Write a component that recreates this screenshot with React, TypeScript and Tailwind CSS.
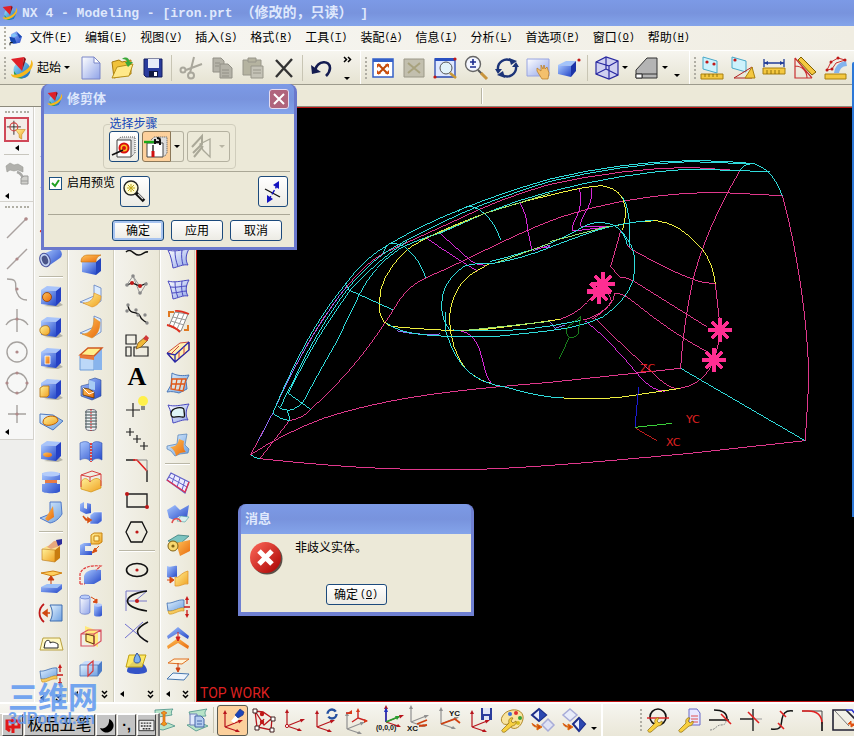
import React from "react";

type Glyph = React.ReactNode;

function Icon({ children, className = "h-6 w-6" }: { children: Glyph; className?: string }) {
  return (
    <svg viewBox="0 0 24 24" className={`${className} shrink-0 overflow-visible`} fill="none" aria-hidden="true">
      {children}
    </svg>
  );
}

function Gradients() {
  const pairs: [string, string, string][] = [
    ["blue", "#a9c8ff", "#2447c8"],
    ["sky", "#e4f3ff", "#6d9fe0"],
    ["gold", "#fff29a", "#f0a020"],
    ["orange", "#ffc45a", "#e8690c"],
    ["steel", "#ffffff", "#8fa3e8"],
    ["globe", "#9fe8ff", "#0a5fb8"],
    ["error", "#ff6a5a", "#a80000"],
  ];
  return (
    <svg className="absolute h-0 w-0" aria-hidden="true">
      <defs>
        {pairs.map(([id, a, b]) => (
          <linearGradient key={id} id={id} x1="0" y1="0" x2="1" y2="1">
            <stop offset="0" stopColor={a} />
            <stop offset="1" stopColor={b} />
          </linearGradient>
        ))}
      </defs>
    </svg>
  );
}

const cube = (
  <>
    <path d="M5 22l14 1 5-2-4-3z" fill="#b5b3a6" />
    <path d="M2 6l6-4 14 1-5 4z" fill="#a8c4fa" />
    <path d="M2 6l15 1v15L2 20z" fill="url(#blue)" />
    <path d="M17 7l5-4v14l-5 5z" fill="#2440c4" />
  </>
);

const axes = (x: number, y: number, color = "#b8141c") => (
  <g stroke={color} fill={color} strokeWidth="1.2">
    <path d={`M${x} ${y}V${y - 15}M${x} ${y}l15-6M${x} ${y}l12 4`} fill="none" />
    <path d={`M${x} ${y - 17}l2 4h-4zM${x + 18} ${y - 7}l-5 0 1 3.500zM${x + 15} ${y + 5}l-5 0 2-3z`} stroke="none" />
  </g>
);

const wrench = (
  <path d="M2 22l7-7c-1-3 1-6 4-5l-2 3 2 2 3-2c1 3-2 5-4 5l-7 6c-2 1-4-1-3-2z" fill="#f8d040" stroke="#8a6a10" strokeWidth=".7" />
);

const dot = (x: number, y: number, r = 1.6, fill = "#c01818") => <circle key={`${x}-${y}`} cx={x} cy={y} r={r} fill={fill} />;

const nxLogo = (
  <>
    <circle cx="12" cy="14" r="8.500" fill="url(#globe)" />
    <path d="M4 15c3 5 6 6 9 7-5 2-10-2-9-7z" fill="#28a058" />
    <path d="M21 4c5 4-1 13-8 16-6 3-12 2-12-2 4 2 8 0 12-2 5-3 9-7 8-12z" fill="#f6b81c" />
    <path d="M1 3l13-2-2 14z" fill="#e02028" />
    <path d="M14 1l2 2-4 12z" fill="#8c0c14" />
  </>
);

/* Curved quad patch shared by the free-form surface tools. */
const patchOutline = "M2 3c6 2 13 0 21-1-3 5-4 11-1 16-5-1-10 2-15 3-1-6-2-12-5-18z";

const I: Record<string, Glyph> = {
  part: (
    <>
      <path d="M5 6l8-4 8 8-3 9-10 2-5-6z" fill="url(#blue)" />
      <path d="M2 10l8 2 3 8-8 0zM13 3l8 7-4 2z" fill="#1747b0" />
      <path d="M4 8l6-3 4 4-6 2z" fill="#7fc4f8" />
      <path d="M3 23v-4h4" stroke="#111" strokeWidth="1.500" />
    </>
  ),
  page: (
    <>
      <path d="M3 1h12l6 6v16H3z" fill="url(#steel)" stroke="#7a86c8" />
      <path d="M15 1v6h6z" fill="#fff" stroke="#7a86c8" />
    </>
  ),
  open: (
    <>
      <path d="M2 6l7-2 3 2 9-2v14l-17 4z" fill="#f0c23a" stroke="#a87c10" />
      <path d="M2 22l5-11 16-3-4 12z" fill="#ffe98a" stroke="#b89018" />
      <path d="M12 3c4-3 7-1 8 3h3l-5 5-3-5h2c0-2-2-3-5-3z" fill="#3aa838" />
    </>
  ),
  save: (
    <>
      <path d="M3 3h18v18H5l-2-2z" fill="#2a3c9c" stroke="#141e60" />
      <path d="M7 3h11v9H7z" fill="#e8ecf8" />
      <path d="M8 15h9v6H8z" fill="#101840" />
      <path d="M13 16h3v4h-3z" fill="#fff" />
    </>
  ),
  cut: (
    <g stroke="#a9a79c" strokeWidth="2">
      <path d="M15 1l-4 16M23 8L7 14" />
      <circle cx="4" cy="14" r="2.500" />
      <circle cx="12" cy="19.500" r="3" />
    </g>
  ),
  copy: (
    <g fill="#b5b3a8" stroke="#929086">
      <path d="M3 2h8l3 3v11H3z" />
      <path d="M10 8h8l4 4v10H10z" />
      <path d="M12 14h7M12 17h7M12 20h7M5 7h5M5 10h4" />
    </g>
  ),
  paste: (
    <g fill="#b5b3a0" stroke="#98968a">
      <path d="M2 4h18v15H2z" />
      <path d="M7 2h8v4H7z" />
      <path d="M10 10h12v12H10z" fill="#c4c2b6" />
      <path d="M12 14h8M12 17h8" />
    </g>
  ),
  del: <path d="M4 4l16 17M20 3L4 21" stroke="#333" strokeWidth="2.400" />,
  undo: (
    <>
      <path d="M5 14C8 4 20 4 20 12c0 4-2 6-4 8" stroke="#141c50" strokeWidth="2.600" />
      <path d="M1 9l10 7-9 2z" fill="#141c50" />
    </>
  ),
  fit: (
    <>
      <path d="M2 3h20v18H2z" fill="#fff" stroke="#3460c8" strokeWidth="1.500" />
      <path d="M2 3h20v3H2z" fill="#3460c8" />
      <path d="M7 8l10 10M17 8L7 18" stroke="#c04808" strokeWidth="2" />
      <path d="M6 8h4l-4 4zM18 8v4l-4-4zM6 18v-4l4 4zM18 18h-4l4-4z" fill="#d05010" />
    </>
  ),
  fitOff: (
    <>
      <path d="M2 3h20v18H2z" fill="#c2bfae" stroke="#9b9888" />
      <path d="M6 7l12 10M18 7L6 17" stroke="#a8a27e" strokeWidth="2" />
    </>
  ),
  zoomBox: (
    <>
      <path d="M2 3h20v18H2z" fill="#dfe8ff" stroke="#2848b0" strokeWidth="1.300" />
      <path d="M2 2h20v3H2z" fill="#2a50c0" />
      <circle cx="13" cy="12" r="6" fill="#e4f4fa" stroke="#555" />
      <path d="M17 17l6 5" stroke="#c89838" strokeWidth="2.600" />
      {dot(22, 3)}
      {dot(2, 21)}
    </>
  ),
  zoom: (
    <>
      <circle cx="9" cy="8" r="7.500" fill="#f4f6ff" stroke="#666" strokeWidth="1.400" />
      <path d="M9 3v6M6 6h6M6 11h6" stroke="#1c2c90" strokeWidth="1.600" />
      <path d="M14 14l4 4" stroke="#555" strokeWidth="2" />
      <path d="M17 17l6 6" stroke="#c8943c" strokeWidth="3" />
    </>
  ),
  rotate: (
    <g stroke="#1c3478" strokeWidth="2.400">
      <path d="M3 14C2 6 10 1 17 5M21 10c1 8-7 13-14 9" />
      <path d="M14 2l8 3-6 4zM10 22l-8-3 6-4z" fill="#1c3478" strokeWidth="0" />
      <path d="M17 11l7 0-3-5zM0 13l7 0-4 5z" fill="#1c3478" strokeWidth="0" />
    </g>
  ),
  pan: (
    <>
      <path d="M1 3h22v17H1z" fill="url(#steel)" stroke="#98a4e0" />
      <path d="M11 12l4 3V9l2 4 1-4 1 4 2-2 2 6-1 6h-6l-5-8z" fill="#f4c06c" stroke="#b87820" strokeWidth=".7" />
    </>
  ),
  box: (
    <>
      <path d="M1 9l8-4h10l-5 5z" fill="#a4c4fa" />
      <path d="M1 9l13 1v11L1 18z" fill="url(#blue)" />
      <path d="M14 10l5-5v10l-5 6z" fill="#1c34a8" />
      {dot(22, 4)}
    </>
  ),
  wire: (
    <g stroke="#2828a0" strokeWidth="1.200">
      <path d="M1 6l10-5 12 4v14l-9 4L1 18z" fill="#cfd0f0" />
      <path d="M1 6l13 4v13M14 10l9-5M11 1v12L1 18M11 13l12 6" />
    </g>
  ),
  shade: (
    <>
      <path d="M1 14L12 2h10v20H1z" fill="#b4b4b4" stroke="#333" />
      <path d="M1 18h21M7 18v4" stroke="#333" />
      <path d="M1 18h6v4H1z" fill="#fff" stroke="#333" />
    </>
  ),
  ruler1: (
    <>
      <path d="M3 1l14 4v12L3 13z" fill="#cdf2fc" stroke="#48a8c8" />
      {dot(7, 6)}
      {dot(14, 8)}
      <path d="M1 18h22v5H1z" fill="#f4c840" stroke="#a88010" />
      <path d="M5 18v3M9 18v3M13 18v3M17 18v3" stroke="#806000" strokeWidth=".8" />
    </>
  ),
  ruler2: (
    <>
      <path d="M1 1l14 4v11L1 12z" fill="#cdf2fc" stroke="#48a8c8" />
      {dot(4, 4)}
      <path d="M3 22l18-11v11z" stroke="#b02020" />
      <path d="M14 22l7-11 3 11z" fill="#f4c840" stroke="#a88010" />
    </>
  ),
  ruler3: (
    <>
      <path d="M1 12h22v6H1z" fill="#f4c840" stroke="#a88010" />
      <path d="M5 14v4M9 14v4M13 14v4M17 14v4" stroke="#806000" strokeWidth=".8" />
      <path d="M2 7h20M2 3v8M22 3v8" stroke="#203c98" strokeWidth="1.300" />
      <path d="M2 7l4-2v4zM22 7l-4-2v4z" fill="#203c98" />
    </>
  ),
  ruler4: (
    <>
      <path d="M2 2v20h17M2 10c7 0 12 5 12 12M2 2l17 20" stroke="#c83030" strokeWidth="1.200" />
      <path d="M8 1l15 15-4 3L5 4z" fill="#f4c840" stroke="#806000" />
    </>
  ),
  ruler5: (
    <>
      <path d="M1 18h21v5H1z" fill="#f4c840" stroke="#a88010" />
      <path d="M10 17c1-7 5-11 12-12l1 5c-5 0-7 3-8 7z" fill="#84b4ee" />
      <path d="M3 14L7 6l7-4 7 2M3 14l5-1 4-6 9-3" stroke="#c83030" />
      {[[3, 14], [7, 6], [14, 2], [21, 4], [8, 13]].map(([a, b]) => dot(a, b, 1.5))}
    </>
  ),
  tube: (
    <>
      <path d="M4 8l12-5c6-2 9 6 5 9L8 21z" fill="url(#blue)" />
      <ellipse cx="6" cy="14" rx="5" ry="7" fill="#c4d4f4" stroke="#48509c" transform="rotate(-20 6 14)" />
      <ellipse cx="6" cy="14" rx="3" ry="4.500" fill="#4a5488" transform="rotate(-20 6 14)" />
    </>
  ),
  hole: (<>{cube}<circle cx="8" cy="13" r="4.500" fill="url(#orange)" stroke="#903c00" strokeWidth=".8" /></>),
  boss: (<>{cube}<path d="M1 14c1-3 5-4 8-3 3 3 2 8-1 9-4 1-8-2-7-6z" fill="url(#gold)" stroke="#b07010" strokeWidth=".8" /></>),
  pocket: (<>{cube}<path d="M6 10h5v8H6z" fill="url(#orange)" stroke="#fff" strokeWidth=".8" /></>),
  pad: (<>{cube}<path d="M1 11l3-2h6v9l-2 2H1z" fill="url(#gold)" stroke="#b07010" strokeWidth=".8" /></>),
  slot: (<>{cube}<path d="M4 15c2-2 9-2 9 1s-9 3-9-1z" fill="url(#orange)" /></>),
  emboss: (
    <>
      <path d="M1 6l13 1 10 6-10 9L1 15z" fill="url(#sky)" stroke="#4c78c0" />
      <path d="M4 14c0-7 14-8 15-2 0 5-15 8-15 2z" fill="url(#gold)" stroke="#c06000" />
    </>
  ),
  groove: (
    <>
      <path d="M3 3h18v7h-3v4h3v7c0 3-18 3-18 0v-7h3v-4H3z" fill="url(#blue)" />
      <ellipse cx="12" cy="4" rx="9" ry="2.500" fill="#b4ccfa" />
      <path d="M6 10h12v3H6z" fill="#e87c44" />
    </>
  ),
  dart: (
    <>
      <path d="M11 1h11l1 12c-3 5-7 8-12 9L1 17l10-4z" fill="url(#sky)" stroke="#5078c8" />
      <path d="M6 18l8-13 1 11-6 4z" fill="url(#orange)" />
    </>
  ),
  goldCube: (
    <>
      <path d="M3 10l5-3h12l-3 4z" fill="#fbe08c" />
      <path d="M3 10l13 1v12L3 21z" fill="url(#gold)" stroke="#b87410" strokeWidth=".6" />
      <path d="M16 11l5-4v12l-5 4z" fill="#c87c10" />
      <path d="M8 8l7-6 8-1-2 6-9 3z" fill="#e8a87c" />
      <path d="M17 1l6-1v5l-4 2z" fill="#2c2c9c" />
    </>
  ),
  lift: (
    <>
      <path d="M2 3l12-2 9 2-10 3z" fill="#ffd060" stroke="#d08010" />
      <path d="M12 15V9M9 10l3-4 3 4z" stroke="#c83c10" fill="#c83c10" />
      <path d="M2 17l6-3h15l-5 4z" fill="#9cc0f8" />
      <path d="M2 17l16 1v5L2 22zM18 18l5-4v5l-5 4z" fill="url(#blue)" />
    </>
  ),
  offset: (
    <>
      <path d="M5 3c-6 5-6 13 0 18" stroke="#c01818" strokeWidth="1.800" />
      <path d="M4 12h7M8 9l-4 3 4 3z" stroke="#d04810" strokeWidth="1.500" fill="#d04810" />
      <path d="M11 4h12v16H11c3-5 3-11 0-16z" fill="url(#sky)" stroke="#3c6cb0" />
    </>
  ),
  sketch: (
    <>
      <path d="M4 6h17l3 12H1z" fill="#fff8c4" stroke="#b8a040" />
      <path d="M5 16l1-5c1-4 6-3 5 0 3-2 6 0 8 1v4z" fill="#fff" stroke="#222" />
    </>
  ),
  thicken: (
    <>
      <path d="M1 8c5 1 11-4 17-3v8C13 12 8 17 2 16z" fill="url(#sky)" stroke="#3c6cb0" strokeWidth=".8" />
      <path d="M2 16c6 1 11-4 16-3v3c-6-1-10 4-15 3z" fill="url(#gold)" stroke="#c89018" strokeWidth=".6" />
      <path d="M21 3v6M21 15v6M18 12h6" stroke="#c81818" strokeWidth="1.300" />
      <path d="M19 5l2-4 2 4zM19 19l2 4 2-4z" fill="#c81818" />
    </>
  ),
  edgeBlend: (
    <>
      <path d="M3 9h14v13L3 19z" fill="url(#blue)" />
      <path d="M17 9l5-4v13l-5 4z" fill="#2444bc" />
      <path d="M2 9c0-5 3-7 7-7h13c-3 1-5 3-5 7z" fill="url(#orange)" stroke="#c87008" strokeWidth=".6" />
    </>
  ),
  faceBlend: (
    <>
      <path d="M1 18l14-6V1l7 3v13l-8 5z" fill="#dcecff" stroke="#6080c0" strokeWidth=".8" />
      <path d="M4 19c7 0 11-4 11-10l7 3c0 6-4 10-9 11z" fill="url(#gold)" stroke="#e09020" strokeWidth=".6" />
    </>
  ),
  softBlend: (
    <>
      <path d="M1 18l14-6V1l7 3v13l-8 5z" fill="#dcecff" stroke="#6080c0" strokeWidth=".8" />
      <path d="M3 19c8 0 12-6 12-16l6 4c0 8-3 13-8 16z" fill="url(#orange)" stroke="#e09020" strokeWidth=".6" />
    </>
  ),
  chamfer: (
    <>
      <path d="M1 10h14v14H1z" fill="#bcd8f8" stroke="#6c9cd8" />
      <path d="M15 10l8-8v22h-8z" fill="#88b4ec" />
      <path d="M1 9l8-7h14l-8 8z" fill="#fff08c" stroke="#d05820" strokeWidth="1.400" />
      <path d="M1 9l14 1v4L1 12z" fill="#e87838" />
    </>
  ),
  shell: (
    <>
      <path d="M2 9l8-2V3l6-2 6 2v16l-9 4-11-4z" fill="url(#blue)" stroke="#284890" strokeWidth=".6" />
      <path d="M10 3l6 2v8l-6-1z" fill="#a8ccf4" />
      <path d="M4 11l6 1 5 3v6L4 18z" fill="url(#orange)" stroke="#5c3808" strokeWidth=".8" />
      <path d="M4 11l6 6 5-2" stroke="#fff" />
    </>
  ),
  thread: (
    <>
      <path d="M7 3c0-2 10-2 10 0v18c0 2-10 2-10 0z" fill="#eef2f4" stroke="#667" />
      {[4, 7, 10, 13, 16, 19].map((y) => <path key={y} d={`M6 ${y}h12`} stroke="#566" strokeWidth="1.200" />)}
      <path d="M12 1v22" stroke="#d03030" strokeDasharray="2 1" />
    </>
  ),
  sew: (
    <>
      <path d="M1 4c4-2 8-2 10 1v17c-3-3-6-3-10-1zM23 4c-4-2-8-2-10 1v17c3-3 6-3 10-1z" fill="url(#blue)" stroke="#3454b0" strokeWidth=".6" />
      <path d="M12 4v19" stroke="#e02020" strokeWidth="1.600" strokeDasharray="2 1" />
    </>
  ),
  patch: (
    <>
      <path d="M2 12c3-5 6-4 9 0 4-4 8-5 11-1v7l-10 4-10-3z" fill="url(#gold)" stroke="#d09010" strokeWidth=".7" />
      <path d="M2 5l9 2 11-3-9-3zM2 5v12M22 4v12M11 7v5" stroke="#d84040" />
    </>
  ),
  unite: (
    <>
      <path d="M1 3l4-2v6l3 1V2l4 1v9l-5 1-6-3z" fill="url(#blue)" />
      <path d="M11 14l4-3h8v9l-4 3h-8z" fill="url(#blue)" stroke="#fff" strokeWidth=".5" />
      <path d="M4 15l3 4h3M9 17l3 2-3 2z" stroke="#d85010" fill="#d85010" strokeWidth="1.500" />
    </>
  ),
  subtract: (
    <>
      <path d="M12 3l3-2h8v9l-3 2h-8z" fill="url(#gold)" stroke="#c88410" />
      <path d="M15 4h5v5h-5z" fill="#fff4b0" stroke="#c88410" />
      <path d="M1 13l4-2h7v3H6v5h7v4H1z" fill="url(#blue)" />
      <path d="M20 14l-5 5M16 16l-3 5 5-2z" stroke="#d85010" fill="#d85010" />
    </>
  ),
  trimBody: (
    <>
      <path d="M5 13c2-6 8-7 17-6v10l-7 4H5z" fill="url(#blue)" />
      <path d="M1 21V11C3 4 12 2 22 3l-5 4M1 21h5" stroke="#e03838" strokeWidth="1.200" strokeDasharray="3 1" />
    </>
  ),
  cylinders: (
    <>
      <path d="M1 3v15c0 3 10 3 10 0V3z" fill="url(#steel)" stroke="#5068c0" strokeWidth=".6" />
      <ellipse cx="6" cy="3" rx="5" ry="2" fill="#b8ccfa" stroke="#5068c0" strokeWidth=".6" />
      <path d="M15 11v10c0 2 8 2 8 0V11z" fill="url(#blue)" />
      <ellipse cx="19" cy="11" rx="4" ry="1.700" fill="#b8ccfa" />
      <path d="M12 3l5 3M14 8l4-3 0 4z" stroke="#d84810" fill="#d84810" />
    </>
  ),
  split: (
    <>
      <path d="M6 1l13 5v16L6 17z" fill="#ffe97c" />
      <path d="M2 9l7-4h13v11l-7 5H2zM2 9h13v12M15 9l7-4" stroke="#d85060" strokeWidth="1.200" />
      <path d="M7 9l8 2v8l-8-3z" stroke="#603818" />
    </>
  ),
  slab: (
    <>
      <path d="M1 9l5-4h17l-4 4z" fill="#c8dcfa" />
      <path d="M1 9h18v11H1z" fill="url(#sky)" stroke="#4c74b8" strokeWidth=".8" />
      <path d="M19 9l4-4v10l-4 5z" fill="#4c7cc8" />
      <path d="M9 20V9l5-4v10z" stroke="#d83838" strokeWidth="1.200" />
    </>
  ),
  curve: <path d="M1 11c5-5 8 4 13 3 4 0 5-4 9-3" stroke="#111" strokeWidth="1.600" />,
  spline: (
    <>
      <path d="M1 14L8 4l7 18 6-10M8 4l6 9" stroke="#999" />
      <path d="M2 13l5-2 8 3 7-3" stroke="#111" strokeWidth="1.300" />
      {[[2, 13], [8, 4], [15, 21], [21, 12]].map(([a, b]) => dot(a, b, 1.8, "#888"))}
      {dot(7, 11, 2)}
      {dot(15, 14, 2)}
    </>
  ),
  spline2: (
    <>
      <path d="M3 3c2 10 9 4 12 10 1 4 3 4 7 7" stroke="#111" strokeWidth="1.300" />
      {[[3, 2], [2, 8], [11, 7], [13, 12], [20, 12], [22, 20]].map(([a, b]) => dot(a, b, 1.7, "#888"))}
    </>
  ),
  rects: (
    <>
      <path d="M1 1h10v9H1zM1 13h5v9H1zM9 13h14v9H9z" stroke="#222" strokeWidth="1.200" />
      <path d="M11 15l2-6 7-6 3 3-7 7z" fill="#f0b838" stroke="#704808" strokeWidth=".7" />
      <path d="M18 5l3-4 3 3-2 3z" fill="#d03838" />
    </>
  ),
  point: (
    <>
      <path d="M1 14h14M8 7v14" stroke="#222" strokeWidth="1.200" />
      <circle cx="18" cy="5" r="5" fill="#fff04a" />
      <path d="M16 10h4v4h-4z" fill="#888" />
    </>
  ),
  points: <path d="M1 5h8M5 1v8M8 12h8M12 8v8M15 19h8M19 15v8" stroke="#222" strokeWidth="1.200" />,
  corner: (
    <>
      <path d="M1 2h9M22 12v12" stroke="#222" strokeWidth="1.400" />
      <path d="M8 2h4l10 11" stroke="#e02020" strokeWidth="1.600" />
      <path d="M12 2h10v11" stroke="#888" />
    </>
  ),
  rect: (<><path d="M2 5h20v13H2z" stroke="#222" strokeWidth="1.400" />{dot(2, 5, 2)}{dot(22, 18, 2)}</>),
  hex: (<><path d="M6 2h11l5 10-5 10H6L1 12z" stroke="#111" strokeWidth="1.300" />{dot(12, 12)}</>),
  ellipse: (<><ellipse cx="12" cy="12" rx="10.500" ry="6.500" stroke="#111" strokeWidth="1.600" />{dot(12, 12)}</>),
  parabola: (
    <>
      <path d="M1 2h21M1 2v20M1 12h21M10 12L22 2" stroke="#7878c8" />
      <path d="M22 2C-4 6-4 18 22 22" stroke="#111" strokeWidth="1.600" />
      {dot(12, 12, 2)}
    </>
  ),
  hyper: (
    <>
      <path d="M0 4l22 18M0 18L18 2" stroke="#7070d0" />
      <path d="M23 2c-14 7-14 12 0 20" stroke="#111" strokeWidth="1.600" />
    </>
  ),
  conic: (
    <>
      <path d="M2 20c0-4 4-8 10-12 6 4 10 8 10 12 0 4-20 4-20 0z" fill="#3454c8" />
      <path d="M4 4h17l-4 12H1z" fill="#ffe850" fillOpacity=".85" stroke="#c0a010" />
      <path d="M12 2c5 6 4 10 0 10s-4-4 0-10z" fill="#7cb0f0" stroke="#3050a0" />
    </>
  ),
  surf1: (
    <>
      <path d={patchOutline} fill="url(#steel)" stroke="#4a4ac0" />
      <path d="M9 3.500c0 6 1 11 3 16M16 3c-1 6 0 11 1 15" stroke="#4a4ac0" />
    </>
  ),
  surf2: (
    <>
      <path d={patchOutline} fill="url(#steel)" stroke="#4a4ac0" />
      <path d="M9 3.500c0 6 1 11 3 16M16 3c-1 6 0 11 1 15M4 9c7 1 11-1 17-1M6 15c6 0 10-2 15-2" stroke="#4a4ac0" />
    </>
  ),
  mesh: (
    <>
      <path d="M9 3l13 2-7 17L3 17z" fill="#fff" stroke="#888" />
      <path d="M13 4L7 18M18 5l-7 15M7 8l13 3M5 12l13 4" stroke="#999" />
      <path d="M9 2c4-1 9 1 14 3M1 16c5 1 10 4 13 7" stroke="#e03020" strokeWidth="1.800" />
      <path d="M3 8V3h5M18 21h4v-5" stroke="#e07820" strokeWidth="2" />
    </>
  ),
  swept: (
    <>
      <path d="M1 13L14 3l9-1v8L9 22z" fill="#fff0b0" stroke="#d05040" />
      <path d="M1 13l8 2L23 2M9 15v7M1 13l8 9L23 10V2" stroke="#2828a8" strokeWidth="1.300" />
      <path d="M5 14l8-8M13 12v6M18 7v7" stroke="#d04040" />
    </>
  ),
  nsided: (
    <>
      <path d="M6 2c5 3 11 3 17 2l-3 6 1 8-8 4c-4-1-7-2-12-1l4-7z" fill="url(#sky)" stroke="#4c78b8" />
      <path d="M6 8h14l-3 12-12-2zM5 13h14M11 8L9 19M16 8l-3 12" fill="#fff4d8" fillOpacity=".6" stroke="#e05818" strokeWidth="1.300" />
    </>
  ),
  trimSheet: (
    <>
      <path d={patchOutline} fill="url(#steel)" stroke="#4a4ac0" />
      <path d="M5 12c0-7 13-8 13-4s2 8-2 7c-5-2-11 3-11-3z" fill="#dff4f8" stroke="#111" strokeWidth="1.300" />
    </>
  ),
  styled: (
    <>
      <path d="M12 2l9-1-2 11 4 4-1 4-8 1-5 2-4-5-4-2v-3l10-2z" fill="url(#sky)" stroke="#5080b8" strokeWidth=".7" />
      <path d="M4 14c7 0 8-4 9-8l5 2c-1 6 0 9 2 11l-6 1-4 3c-1-5-3-7-6-9z" fill="url(#orange)" />
    </>
  ),
  brick: (
    <>
      <path d="M1 9l4-7 18 9-4 11z" fill="#ecebff" stroke="#6060c8" strokeWidth="1.200" />
      <path d="M3 6l18 10M9 4L6 12M14 7l-3 9M19 9l-3 10" stroke="#6060c8" />
      <path d="M1 9l18 12 4-10" stroke="#e03050" strokeWidth="1.300" />
    </>
  ),
  fold: (
    <>
      <path d="M1 8l8-5 5 5 9-5-2 13-7-2-6 4-5-2z" fill="url(#blue)" />
      <path d="M15 14l8 1-4 5-8-1z" fill="#d8f0f0" stroke="#48a0a0" strokeWidth=".6" />
      <path d="M6 21c1-5 7-6 9-1" stroke="#e05050" strokeWidth="1.600" />
    </>
  ),
  roll: (
    <>
      <path d="M2 8l10-6 11 1-8 7z" fill="#7cc4c0" stroke="#287070" strokeWidth=".7" />
      <path d="M10 10l14-3v11l-10 5z" fill="url(#orange)" />
      <circle cx="7" cy="13" r="5" fill="#f8d870" stroke="#806010" />
      <circle cx="7" cy="13" r="1.600" fill="#806010" />
    </>
  ),
  transform: (
    <>
      <path d="M1 2c4 2 7-1 10 0v11c-4-1-7 2-10 0z" fill="url(#blue)" />
      <path d="M9 13c4 2 5-4 13-6v13c-4-1-8 3-13 2z" fill="url(#gold)" stroke="#e09020" strokeWidth=".7" />
      <path d="M1 16h5M4 13l4 3-4 3z" fill="#d84810" stroke="#d84810" />
    </>
  ),
  chevrons: (
    <>
      <path d="M1 10L12 1l11 9-1 3-10-6-10 6z" fill="url(#blue)" />
      <path d="M1 20l11-8 11 8-1 3-10-6-10 6z" fill="url(#orange)" />
      <path d="M12 6v7M10 11h4l-2 4z" stroke="#d02020" fill="#d02020" />
    </>
  ),
  planes: (
    <>
      <path d="M2 6l6-4h15l-7 5z" fill="#fff4d8" stroke="#e07020" />
      <path d="M1 22l6-6 16 1-5 6z" fill="#eef4fc" stroke="#4878b0" />
      <path d="M12 6v6M10 11h4l-2 4z" stroke="#d04010" fill="#d04010" />
    </>
  ),
  filter: (
    <>
      <path d="M9 2v16M1 9h16" stroke="#222" />
      <circle cx="9" cy="9" r="4.500" stroke="#d04040" strokeWidth="1.300" />
      <path d="M11 12h11l-4 6v5l-3-2v-3z" fill="url(#gold)" stroke="#c08010" strokeWidth=".6" />
    </>
  ),
  pathOff: (
    <>
      <path d="M1 4l4-3 4 2 4-1 5 3v5l-5-2-4 1-4-1-3 2z" fill="#b0b0ac" stroke="#9a9a96" strokeWidth=".6" />
      <path d="M12 10c3 1 5 3 6 6" stroke="#a9a9a6" strokeWidth="2.500" />
      <path d="M16 16l3-2h4v8h-7z" fill="#d0d0cc" stroke="#9a9a98" />
      <path d="M16 19h7" stroke="#9a9a98" />
    </>
  ),
  line: (<><path d="M2 22L22 2" stroke="#aaa29f" strokeWidth="1.400" />{dot(21, 3, 1.8, "#b08a8a")}</>),
  line2: (<><path d="M2 22L22 2" stroke="#aaa29f" strokeWidth="1.400" />{dot(12, 12, 1.6, "#b08a8a")}</>),
  sCurve: (<><path d="M2 1c14 0 6 8 10 14 2 5 5 7 10 7" stroke="#a6a29f" strokeWidth="1.400" />{dot(12, 11, 1.6, "#b08a8a")}</>),
  arcOff: (<><path d="M1 16c5-8 17-8 22 0M12 0v23" stroke="#a6a29f" strokeWidth="1.400" />{dot(12, 10, 1.6, "#b08a8a")}</>),
  circleDot: (<><circle cx="12" cy="12" r="10" stroke="#a6a29f" strokeWidth="1.400" />{dot(12, 12, 1.6, "#b08a8a")}</>),
  circle4: (<><circle cx="12" cy="12" r="10" stroke="#a6a29f" strokeWidth="1.400" />{[[12, 2], [2, 12], [22, 12], [12, 22]].map(([a, b]) => dot(a, b, 1.6, "#b08a8a"))}</>),
  plusOff: (<><path d="M12 3v18M3 12h18" stroke="#a6a29f" strokeWidth="1.400" />{dot(12, 12, 1.6, "#b08a8a")}</>),
  layers: (
    <>
      <path d="M1 2l18-1c-2 2-2 4-1 6L4 9c-3 0-3-4-3-7z" fill="#b8e4c8" stroke="#489088" strokeWidth=".8" />
      <path d="M1 17l13-2 7 3-12 4c-3 0-6-2-8-5z" fill="#b8e4c8" stroke="#489088" strokeWidth=".8" />
      <path d="M7 5l3-2 3 2-2 1v8l2 2-3 2-3-2 2-2V6z" fill="#f09818" stroke="#c84c10" strokeWidth=".6" />
    </>
  ),
  layers2: (
    <>
      <path d="M4 4l18-3c-3 3-2 5-1 7L6 9z" fill="#b8e4c8" stroke="#489088" strokeWidth=".8" />
      <path d="M2 17l14-2 7 3-12 5z" fill="#b8e4c8" stroke="#489088" strokeWidth=".8" />
      <path d="M5 6h7v11H5z" fill="#dfe8fc" stroke="#7080b8" />
      <path d="M10 8h6l3 3v8h-9z" fill="#b4ccf0" stroke="#4464a8" />
      <path d="M12 13h5M12 16h5" stroke="#4464a8" />
    </>
  ),
  csysLight: (
    <>
      {axes(4, 19)}
      <path d="M10 13l5-6 3 4-5 4z" fill="#fff" />
      <path d="M14 7l5-6 4 3-1 3-5 3z" fill="#1c44b8" stroke="#102c80" strokeWidth=".6" />
    </>
  ),
  csysBox: (
    <>
      <path d="M3 3l2 16 14 3 1-12-9-6zM3 3l9 14 7-6M6 20l6-9" stroke="#b8141c" strokeWidth="1.300" />
      {[[3, 3], [5, 20], [20, 22], [21, 11]].map(([a, b]) => <path key={a} d={`M${a - 2} ${b - 2}h4v4h-4z`} fill="#fff" stroke="#402020" />)}
      {dot(10, 6, 2.2)}
      {dot(10, 14, 2.2)}
    </>
  ),
  csys: (<>{axes(4, 18)}<circle cx="4" cy="18" r="1.600" fill="#fff" stroke="#b8141c" /></>),
  csysRot: (<>{axes(3, 19)}<circle cx="18" cy="6" r="4.500" stroke="#2450a0" strokeWidth="2.400" strokeDasharray="11 3" /></>),
  csysMove: (
    <>
      {axes(2, 21, "#909090")}
      <path d="M13 2v8l9 3M13 10l-6 4M1 5h6" stroke="#c82020" strokeWidth="1.400" />
      <path d="M1 6l6-4v4zM13 0l2 4h-4zM23 13l-4-2v4z" fill="#d83818" />
    </>
  ),
  csysZero: (
    <>
      {axes(10, 14)}
      <path d="M10 14V1" stroke="#2030c0" strokeWidth="1.600" />
      <path d="M10-1l2 5H8z" fill="#2030c0" />
      <path d="M10 14l12-5" stroke="#28a030" strokeWidth="1.600" />
      <path d="M24 8l-5 0 2 4z" fill="#28a030" />
      <text x="0" y="22" fontSize="7" fontFamily="Liberation Sans, sans-serif" fontWeight="700" fill="#111">(0,0,0)</text>
    </>
  ),
  csysX: (
    <>
      {axes(4, 14, "#909090")}
      <path d="M10 16l10-4M12 18l8-1" stroke="#d04010" strokeWidth="1.800" />
      <text x="0" y="23" fontSize="8" fontFamily="Liberation Sans, sans-serif" fontWeight="700" fill="#111">XC</text>
    </>
  ),
  csysY: (
    <>
      {axes(3, 16, "#909090")}
      <path d="M3 16l14-5 5 4" stroke="#d04010" strokeWidth="1.800" />
      <text x="11" y="8" fontSize="8" fontFamily="Liberation Sans, sans-serif" fontWeight="700" fill="#111">YC</text>
    </>
  ),
  csysSave: (
    <>
      {axes(3, 19)}
      <path d="M12 0h11v12H12z" fill="#2a3c9c" />
      <path d="M14 0h7v6h-7zM15 8h5v4h-5z" fill="#dfe4f4" />
    </>
  ),
  palette: (
    <>
      <path d="M12 2c7-1 12 3 11 9s-6 11-11 9c-3-1 0-5-4-4-5 2-8-3-6-7s5-6 10-7z" fill="#f8e4a0" stroke="#b08828" />
      {dot(10, 6, 2, "#3c70d8")}
      {dot(16, 5, 2, "#e03030")}
      {dot(20, 10, 2, "#38a038")}
      {dot(18, 15, 2, "#d8c020")}
      {wrench}
    </>
  ),
  linkA: (
    <>
      <path d="M8 1l7 6-7 6-7-6z" fill="#e8ecfa" stroke="#1c2c88" strokeWidth="2" />
      <path d="M8 1l7 6-7 6z" fill="#2c48b0" />
      <path d="M17 11l6 6-6 6-6-6z" fill="#dfe2f4" stroke="#a8acd8" strokeWidth="1.500" />
      <path d="M1 15c1 4 3 4 6 4M6 16l5 3-5 3z" stroke="#e07010" fill="#d04c10" />
    </>
  ),
  linkB: (
    <>
      <path d="M8 1l7 6-7 6-7-6z" fill="#e8ecfa" stroke="#a8acd8" strokeWidth="1.500" />
      <path d="M17 10l6 6-6 7-6-7z" fill="#e8ecfa" stroke="#1c2c88" strokeWidth="2" />
      <path d="M17 10l6 6-6 7z" fill="#2c48b0" />
      <path d="M1 15c1 4 3 4 6 4M6 16l5 3-5 3z" stroke="#e07010" fill="#d04c10" />
    </>
  ),
  curveEdit: (<><circle cx="12" cy="9" r="8" stroke="#111" strokeWidth="1.600" /><path d="M1 10h22" stroke="#d82020" strokeWidth="1.400" />{wrench}</>),
  paramEdit: (<><path d="M12 1h8l3 4v12H12z" fill="#e8e8ff" stroke="#6868c8" /><path d="M14 8h7M14 11h7M14 14h7" stroke="#e05050" />{wrench}</>),
  trim1: (
    <>
      <path d="M6 2c8 0 13 3 13 9M1 12h20" stroke="#111" strokeWidth="1.600" />
      <path d="M2 22c6 0 6-5 11-5 4 0 5-2 5-4" stroke="#888" strokeDasharray="2 1" />
      <path d="M13 6l10 10" stroke="#e02020" strokeWidth="1.600" />
    </>
  ),
  trim2: (<><path d="M1 11h13M14 1v22" stroke="#222" strokeWidth="1.400" /><path d="M15 11h8" stroke="#999" /><path d="M9 4l11 11" stroke="#e02020" strokeWidth="1.600" /></>),
  divide: (<><path d="M1 21c12 2 10-6 11-10s2-9 11-8" stroke="#111" strokeWidth="1.500" /><path d="M10 3l6 6M8 15l6 6" stroke="#e02020" strokeWidth="1.600" /></>),
  fillet: (<><path d="M1 3h20v20" stroke="#444" /><path d="M1 3h6c9 0 14 4 14 13" stroke="#e02020" strokeWidth="1.600" /><path d="M21 14v9" stroke="#222" strokeWidth="1.600" /></>),
  stretch: (<><path d="M1 2h13l9 9v11H1z" stroke="#223" strokeWidth="1.600" /><path d="M14 2h6l4 5" stroke="#2830d0" strokeWidth="1.600" /><path d="M3 3l14 15" stroke="#777" /><path d="M24 16h-8l3-3v6z" fill="#e05010" stroke="#e05010" /></>),
  target: (
    <>
      <path d="M5 5l4-3h14v16l-4 4" fill="#ddd" stroke="#555" strokeDasharray="1 1" />
      <path d="M5 5h14v17H5z" fill="#fff" stroke="#444" />
      <circle cx="12" cy="13" r="5.500" fill="#d81010" />
      <circle cx="12" cy="13" r="3.500" fill="#ffc020" />
      <circle cx="12" cy="13" r="2" fill="#d81010" />
      <path d="M0 20l11-5" stroke="#111" strokeWidth="1.800" />
    </>
  ),
  tool: (
    <>
      <path d="M7 5l3-3h13v16l-3 4" fill="#ddd" stroke="#555" strokeDasharray="1 1" />
      <path d="M3 8h16v14H3z" fill="#fff" stroke="#444" />
      <path d="M0 7h11" stroke="#18a818" strokeWidth="2.400" />
      <path d="M11 4v5M12 7h3M13 3c2 0 3 1 3 2v5" stroke="#111" strokeWidth="2" />
      <path d="M9 10v7" stroke="#222" strokeWidth="1.400" />
      <path d="M7.500 16h3v6h-3z" fill="#d01010" />
    </>
  ),
  toolOff: (
    <>
      <path d="M9 9l10-5v18l-7-7z" fill="#f0ede0" stroke="#aaa898" strokeWidth="1.300" />
      <path d="M1 12L11 1v8L2 18M3 22l9-11" stroke="#aaa898" strokeWidth="2" />
    </>
  ),
  preview: (
    <>
      <circle cx="8" cy="8" r="7" fill="#fffbd0" stroke="#222" strokeWidth="1.400" />
      <path d="M8 4v8M4 8h8M5 5l6 6M11 5l-6 6" stroke="#c0a818" />
      <path d="M13 13l8 8" stroke="#111" strokeWidth="3.600" />
      <path d="M15 14l5 5" stroke="#d8d8d8" strokeWidth="1.200" />
    </>
  ),
  flip: (
    <>
      <path d="M4 9l15 8" stroke="#111" strokeWidth="1.300" />
      <path d="M17 4L7 21" stroke="#1414c0" strokeWidth="1.400" strokeDasharray="5 2" />
      <path d="M18 1l0 8-6-4zM6 23l0-8 6 4z" fill="#1414c0" />
    </>
  ),
};

const SEP = "|";

function Tool({ name, on = false, wide = false }: { name: string; on?: boolean; wide?: boolean }) {
  return (
    <button
      type="button"
      aria-label={name}
      className={`flex h-[31px] shrink-0 items-center justify-center ${wide ? "w-full" : "w-[31px]"} ${
        on ? "rounded-[3px] border border-[#5a5a50] bg-[#fcd09c]" : ""
      }`}
    >
      {name === "text" ? (
        <span className="font-['Liberation_Serif',serif] text-[26px] leading-[31px] font-bold text-black">A</span>
      ) : (
        <Icon>{I[name]}</Icon>
      )}
    </button>
  );
}

function Caret() {
  return <span className="h-0 w-0 shrink-0 border-x-[3px] border-t-[3px] border-x-transparent border-t-black" />;
}

function Grip({ across = false }: { across?: boolean }) {
  return across ? (
    <span className="mx-auto my-1 h-0 w-6 shrink-0 border-t-2 border-dotted border-[#b0aea4]" />
  ) : (
    <span className="h-[22px] w-0 shrink-0 border-l-2 border-dotted border-[#b0aea4]" />
  );
}

function Divider() {
  return <span className="mx-[3px] h-[26px] w-px shrink-0 bg-[#c8c5b4]" />;
}

const menus: [string, string][] = [
  ["文件", "F"], ["编辑", "E"], ["视图", "V"], ["插入", "S"], ["格式", "R"], ["工具", "T"],
  ["装配", "A"], ["信息", "I"], ["分析", "L"], ["首选项", "P"], ["窗口", "O"], ["帮助", "H"],
];

function Mnemonic({ letter }: { letter: string }) {
  return (
    <span className="font-['Liberation_Mono',monospace] text-[10px]">
      (<u>{letter}</u>)
    </span>
  );
}

function Palette({ items, className }: { items: string[]; className: string }) {
  return (
    <div className={`flex shrink-0 flex-col overflow-hidden border-r border-l border-r-[#cfccbc] border-l-white bg-linear-to-r from-[#f3f2ec] to-[#ebe8d8] ${className}`}>
      {items.map((name, i) =>
        name === SEP ? (
          <span key={i} className="mx-1 my-[3px] h-px shrink-0 bg-[#bab7a6] shadow-[0_1px_0_#fff]" />
        ) : (
          <Tool key={i} name={name} wide />
        ),
      )}
      <div className="mt-auto flex h-4 shrink-0 items-center justify-between px-[5px]">
        <span className="h-0 w-0 border-y-[3px] border-r-[4px] border-y-transparent border-r-black" />
        <svg viewBox="0 0 7 9" className="h-[9px] w-[7px]" fill="none" stroke="#000" strokeWidth="1.500" aria-hidden="true">
          <path d="M1 1l2.500 2.500L6 1M1 5l2.500 2.500L6 5" />
        </svg>
      </div>
    </div>
  );
}

function Star({ x, y }: { x: number; y: number }) {
  return (
    <g transform={`translate(${x} ${y})`} stroke="#ff2e92">
      <path d="M-36 0H36M0-36V36" strokeWidth="13" />
      <path d="M-25-25L25 25M25-25L-25 25" strokeWidth="10" />
    </g>
  );
}

/* Wireframe strokes, grouped by colour, on a grid three times finer than the screen. */
const wires: [string, string[]][] = [
  ["#e0388c", [
    "M60 926Q330 955 520 958Q620 962 715 958Q900 953 1350 910L1695 872",
    "M32 914Q130 850 250 805C450 740 650 720 930 697L1322 655",
    "M60 926L148 812Q190 805 212 778C330 670 390 590 460 480C490 430 510 400 600 365C700 320 800 265 930 213C1100 150 1300 125 1450 128L1627 137",
    "M1627 137C1680 330 1705 560 1706 680C1704 760 1697 840 1696 872",
    "M1500 62C1430 180 1385 290 1360 385C1335 500 1325 600 1322 655",
    "M98 790C170 630 250 490 325 405Q370 345 430 310L650 210Q780 145 930 103Q1150 55 1350 52L1500 62",
    "M32 914L98 790",
    "M1426 402L1437 500Q1445 590 1410 655Q1380 705 1320 715",
    "M1143 240L1112 350L1140 382Q1165 380 1200 405L1400 530",
    "M1160 285L1175 298Q1300 370 1380 395L1426 402",
    "M1055 508Q1120 470 1125 430Q1150 430 1180 455Q1290 545 1400 605",
    "M960 508Q1020 490 1065 430",
    "M1060 500L1100 540L1250 680Q1290 720 1320 715",
    "M1100 420L1110 440L1115 455Q1080 500 1030 510",
  ]],
  ["#8c6cf0", ["M55 872L98 790C160 650 240 510 318 412", "M470 542Q520 556 600 552", "M930 285L880 302", "M930 515L945 535L975 525"]],
  ["#d828d8", [
    "M840 160Q860 190 863 240L875 298L930 290",
    "M600 250L690 330Q710 348 745 345",
    "M560 265Q640 320 710 362",
    "M660 542Q710 550 725 620Q740 690 755 700",
    "M1018 115Q1030 160 1010 200Q990 240 1000 243L1110 230",
    "M1055 115Q1060 150 1035 190Q1010 230 1030 230L1120 230",
    "M1035 512Q1100 560 1200 680Q1240 725 1275 724",
  ]],
  ["#f0f040", [
    "M418 460Q415 380 500 300Q560 255 735 190Q860 150 930 136Q1050 105 1090 108Q1150 120 1155 170Q1160 200 1147 240",
    "M418 460L418 480Q425 525 460 530Q640 545 700 542Q850 525 930 512L960 508",
    "M1426 402Q1420 340 1385 295Q1320 220 1250 212",
    "M710 363Q640 400 628 500Q630 600 680 660Q720 695 755 700",
    "M970 744Q1050 750 1140 742L1320 715",
    "M750 340L710 363",
    "M1250 212Q1180 212 1110 230",
  ]],
  ["#30dcdc", [
    "M98 790C170 620 235 500 315 405Q370 325 450 281Q640 170 930 87Q1150 35 1350 32Q1480 33 1545 42Q1600 60 1627 137",
    "M122 770C200 600 270 480 345 390Q390 340 430 312Q470 282 660 192Q780 140 930 94Q1150 42 1350 35L1545 42",
    "M145 730C220 580 260 520 335 415Q420 325 500 275",
    "M115 770Q125 782 155 780Q180 770 190 755Q240 660 290 575L360 430Q400 350 480 295Q560 258 600 250L735 190Q830 150 930 125Q1150 68 1350 57L1590 65",
    "M145 730L212 778",
    "M98 790Q120 808 148 812Q148 790 140 782",
    "M430 313Q432 290 450 281Q480 278 500 295Q540 330 557 383",
    "M655 187Q660 175 690 168Q750 180 783 270",
    "M315 400L327 420L460 480",
    "M1500 62Q1510 45 1530 42",
    "M440 520Q480 550 570 556Q680 565 780 558Q880 548 930 542Q1030 530 1090 500Q1160 450 1180 390Q1190 320 1175 290Q1150 240 1120 225Q1080 210 1040 225Q990 255 930 280Q850 310 750 335",
    "M640 540Q800 550 930 528L1020 512",
    "M750 340Q690 340 670 350Q600 400 605 470Q605 510 630 540",
    "M618 485V545Q640 620 680 660Q720 700 800 712Q900 742 970 744",
    "M1147 140Q1175 180 1168 290",
    "M1120 225Q1155 245 1162 285",
    "M750 342Q850 325 930 292Q1050 245 1110 230Q1190 212 1240 212",
    "M1322 655L1695 872",
    "M32 914Q40 924 60 926",
  ]],
  ["#98e070", ["M540 272L735 190L930 130", "M770 338L930 280", "M930 275L1110 228", "M660 543L930 514"]],
  ["#18801c", ["M957 628L988 562Q972 545 985 530L1022 500L1014 552Q1005 565 988 562"]],
];

function Viewport() {
  return (
    <main className="relative min-w-0 flex-1 overflow-hidden border-t border-l border-b border-[#c01414] bg-black">
      <svg viewBox="197 108 657 593" preserveAspectRatio="xMinYMin slice" className="block h-full w-full" role="img" aria-label="iron.prt">
        <g transform="translate(240 150) scale(.33333)" fill="none" strokeWidth="3" shapeRendering="crispEdges">
          {wires.map(([color, paths]) =>
            paths.map((d) => <path key={d} d={d} stroke={color} />),
          )}
          <path d="M1185 832L1196 712" stroke="#1c1cd0" />
          <path d="M1185 832L1296 820" stroke="#3ad03a" />
          <path d="M1188 835L1250 872" stroke="#c01c1c" />
          <Star x={1090} y={402} />
          <Star x={1077} y={425} />
          <Star x={1440} y={540} />
          <Star x={1422} y={630} />
        </g>
        <g fill="#e02020" fontFamily="'DejaVu Sans', sans-serif" fontSize="11">
          <text x="640" y="372">ZC</text>
          <text x="686" y="423">YC</text>
          <text x="666" y="446">XC</text>
        </g>
      </svg>
      <span className="absolute bottom-0 left-[3px] font-[Roboto,sans-serif] text-[14px] leading-4 text-[#dc2020]">TOP WORK</span>
    </main>
  );
}

function XpButton({ children, className = "", focus = false }: { children: React.ReactNode; className?: string; focus?: boolean }) {
  return (
    <button
      type="button"
      className={`flex items-center justify-center rounded-[3px] border border-[#1c4a7c] bg-linear-to-b from-white to-[#ecebe4] text-black ${
        focus ? "shadow-[inset_0_0_0_2px_#a8c4f0]" : ""
      } ${className}`}
    >
      {children}
    </button>
  );
}

const titleFill = "bg-linear-to-b from-[#7c9ae6] via-[#7893dd] to-[#84a4ea]";

function TrimDialog() {
  return (
    <section className="absolute top-[84px] left-[41px] w-[256px] rounded-t-lg border-x-[3px] border-b-[3px] border-[#6a78cc] bg-[#6f86d8]">
      <header className={`flex h-[30px] items-center rounded-t-md pr-[5px] pl-[3px] ${titleFill}`}>
        <Icon className="h-4 w-4">{nxLogo}</Icon>
        <h2 className="ml-1 flex-1 text-[13px] font-bold text-[#dfe8fc]">修剪体</h2>
        <button type="button" aria-label="关闭" className="flex h-5 w-5 items-center justify-center rounded-[3px] border border-[#e4dcf0] bg-[#b0647c]">
          <svg viewBox="0 0 12 12" className="h-3 w-3" stroke="#fff" strokeWidth="2" aria-hidden="true">
            <path d="M1 1l10 10M11 1L1 11" />
          </svg>
        </button>
      </header>
      <div className="bg-[#ece9d8] px-1 pt-[3px] pb-[6px]">
        <fieldset className="mx-auto h-[52px] w-[132px] rounded-[4px] border border-[#d0cdbc] px-[5px]">
          <legend className="ml-px text-[12px] leading-[14px] text-[#1648b8]">选择步骤</legend>
          <div className="flex">
            <XpButton className="mr-[3px] h-[31px] w-[30px]"><Icon>{I.target}</Icon></XpButton>
            <button type="button" aria-label="tool" className="flex h-[31px] w-[29px] items-center justify-center rounded-l-[3px] border border-[#8c7858] bg-[#fcd09c]">
              <Icon>{I.tool}</Icon>
            </button>
            <button type="button" aria-label="more" className="mr-[3px] flex h-[31px] w-[13px] items-center justify-center rounded-r-[3px] border border-l-0 border-[#b4b1a0]">
              <Caret />
            </button>
            <button type="button" disabled aria-label="tool" className="flex h-[31px] w-[43px] items-center justify-between rounded-[3px] border border-[#b4b1a0] pr-1 pl-[3px]">
              <Icon>{I.toolOff}</Icon>
              <span className="h-0 w-0 border-x-[3px] border-t-[3px] border-x-transparent border-t-[#b8b5a4]" />
            </button>
          </div>
        </fieldset>
        <div className="mt-[2px] flex items-start border-t border-[#aaa796] pt-1 pr-0.5 pb-[7px] pl-px">
          <label className="flex items-center gap-[5px] text-[12px] leading-[14px] text-black">
            <span className="relative h-[13px] w-[13px]">
              <input type="checkbox" defaultChecked className="block h-[13px] w-[13px] appearance-none border border-[#1c5180] bg-white" />
              <svg viewBox="0 0 13 13" className="pointer-events-none absolute inset-0" fill="none" stroke="#21a121" strokeWidth="2" aria-hidden="true">
                <path d="M3 6l3 3 4-6" />
              </svg>
            </span>
            启用预览
          </label>
          <XpButton className="ml-[5px] h-[31px] w-[30px]"><Icon>{I.preview}</Icon></XpButton>
          <XpButton className="ml-auto h-[31px] w-[30px]"><Icon>{I.flip}</Icon></XpButton>
        </div>
        <div className="flex justify-end gap-[7px] border-t border-[#aaa796] pt-[5px] pr-2 text-[12px]">
          <XpButton focus className="h-[21px] w-[52px]">确定</XpButton>
          <XpButton className="h-[21px] w-[52px]">应用</XpButton>
          <XpButton className="h-[21px] w-[52px]">取消</XpButton>
        </div>
      </div>
    </section>
  );
}

function MessageDialog() {
  return (
    <section className="absolute top-[504px] left-[238px] w-[236px] rounded-t-lg border-x-[3px] border-b-[4px] border-[#6f80d2] bg-[#7284d4]">
      <header className={`flex h-[30px] items-center rounded-t-md pl-1 ${titleFill}`}>
        <h2 className="text-[13px] font-bold text-[#dfe8fc]">消息</h2>
      </header>
      <div className="bg-[#ece9d8] px-2 py-[7px]">
        <div className="flex gap-3">
          <svg viewBox="0 0 34 34" className="h-[34px] w-[34px]" aria-hidden="true">
            <circle cx="18" cy="18" r="15.500" fill="#5a5048" />
            <circle cx="16.500" cy="16.500" r="15.500" fill="url(#error)" />
            <path d="M10 10l13 13M23 10L10 23" stroke="#fff" strokeWidth="5" />
          </svg>
          <p className="text-[12px] leading-[14px] text-black">非歧义实体。</p>
        </div>
        <XpButton className="mx-auto mt-[9px] h-[21px] w-[61px] gap-0.5 text-[12px]">
          确定 <Mnemonic letter="O" />
        </XpButton>
      </div>
    </section>
  );
}

function InputMethodBar() {
  const cell = "flex h-[22px] items-center justify-center border border-t-white border-r-[#444] border-b-[#444] border-l-white bg-[#c4c4c4] text-black";
  return (
    <div className="absolute bottom-0 left-0 flex gap-px border-t border-r-2 border-t-white border-r-[#777] bg-[#d4d0c8] px-[2px]">
      <button type="button" aria-label="wubi" className={`${cell} w-[21px]`}>
        <svg viewBox="0 0 18 18" className="h-[18px] w-[18px]" fill="none" stroke="#e01818" strokeWidth="3" aria-hidden="true">
          <path d="M9 1v16M3 5h12v6H3zM2 12l4 3" />
        </svg>
      </button>
      <button type="button" className={`${cell} w-[71px] text-[16px] leading-none`}>极品五笔</button>
      <button type="button" aria-label="half width" className={`${cell} w-5`}>
        <svg viewBox="0 0 16 16" className="h-4 w-4" aria-hidden="true"><path d="M11 2a7 7 0 11-9 9c5 2 10-3 9-9z" fill="#000" /></svg>
      </button>
      <button type="button" className={`${cell} w-[19px] text-[14px] font-bold`}>·,</button>
      <button type="button" aria-label="keyboard" className={`${cell} w-[19px]`}>
        <svg viewBox="0 0 18 14" className="h-[14px] w-[17px]" fill="none" stroke="#333" aria-hidden="true">
          <path d="M1 2h16v11H1z" fill="#eee" />
          <path d="M3 5h12M3 8h12M5 11h8" strokeDasharray="2 1" strokeWidth="1.500" />
        </svg>
      </button>
    </div>
  );
}

export default function App() {
  return (
    <div className="relative flex h-screen w-full flex-col overflow-hidden bg-[#ece9d8] font-['Liberation_Sans','Noto_Sans_CJK_SC',sans-serif]">
      <Gradients />
      <header className={`flex h-[26px] shrink-0 items-center gap-1 pl-[2px] ${titleFill}`}>
        <Icon className="h-4 w-4">{nxLogo}</Icon>
        <h1 className="font-['Liberation_Mono','Noto_Sans_CJK_SC',monospace] text-[13px] font-bold whitespace-pre text-[#dfe8fc]">
          NX 4 - Modeling - [iron.prt <span className="text-[14px]">（修改的，只读）</span> ]
        </h1>
      </header>

      <nav className="flex h-6 shrink-0 items-center bg-linear-to-r from-[#f8f8f5] to-[#f0ede2] pl-1">
        <Grip />
        <Icon className="ml-[2px] h-4 w-4">{I.part}</Icon>
        <div className="ml-[6px] flex gap-[13px]">
          {menus.map(([label, key]) => (
            <button key={key} type="button" className="flex items-center text-[12px] leading-4 whitespace-nowrap text-black">
              {label}
              <Mnemonic letter={key} />
            </button>
          ))}
        </div>
      </nav>

      <div className="flex h-[35px] shrink-0 items-center overflow-hidden border-t border-b border-t-white border-b-[#9c9a8c] bg-linear-to-b from-[#f6f5ef] to-[#e6e3d2] pl-1">
        <Grip />
        <button type="button" className="mr-[3px] ml-1 flex w-[62px] shrink-0 items-center gap-[3px] text-[12px] text-black">
          <Icon>{nxLogo}</Icon>
          <span className="whitespace-nowrap">起始</span>
          <Caret />
        </button>
        {["page", "open", "save"].map((n) => <Tool key={n} name={n} />)}
        <Divider />
        {["cut", "copy", "paste", "del"].map((n) => <Tool key={n} name={n} />)}
        <Divider />
        <Tool name="undo" />
        <div className="mr-1 ml-1 flex h-6 w-3 shrink-0 flex-col items-center justify-between text-black">
          <svg viewBox="0 0 9 7" className="h-[7px] w-[9px]" fill="none" stroke="#000" strokeWidth="1.500" aria-hidden="true">
            <path d="M1 1l2.500 2.500L1 6M5 1l2.500 2.500L5 6" />
          </svg>
          <Caret />
        </div>
        <span className="mr-1 ml-[3px] h-full w-px shrink-0 bg-white" />
        <Grip />
        {["fit", "fitOff", "zoomBox", "zoom", "rotate", "pan", "box"].map((n) => <Tool key={n} name={n} />)}
        <Divider />
        <Tool name="wire" />
        <span className="flex"><Caret /></span>
        <span className="w-[3px] shrink-0" />
        <Tool name="shade" />
        <span className="flex"><Caret /></span>
        <span className="ml-[6px] flex pt-4"><Caret /></span>
        <span className="mr-1 ml-[9px] h-full w-px shrink-0 bg-white" />
        <Grip />
        {["ruler1", "ruler2", "ruler3", "ruler4", "ruler5"].map((n) => <Tool key={n} name={n} />)}
      </div>

      <div className="flex h-[22px] shrink-0 items-center border-b border-[#8c8a7c]">
        <span className="h-4 w-[482px] border-r border-[#b8b5a4] shadow-[1px_0_0_#fff]" />
      </div>

      <div className="flex min-h-0 flex-1">
        <div className="flex w-[34px] shrink-0 flex-col items-center bg-[#eeeeec]">
          <div className="flex w-full flex-col border-r border-b border-[#d4d2cc] bg-[#f7f7f6] pb-0.5">
            <Grip across />
            <button type="button" aria-label="filter" className="mx-auto flex h-[25px] w-[25px] items-center justify-center border-2 border-[#d04858] bg-[#f4ece8]">
              <Icon className="h-[21px] w-[21px]">{I.filter}</Icon>
            </button>
            <span className="mx-auto my-[3px] h-0 w-0 border-y-[3px] border-r-[4px] border-y-transparent border-r-black" />
            <span className="mx-1 mb-[3px] h-px bg-[#c8c6be]" />
            <Tool name="pathOff" wide />
            <span className="mt-1 ml-[5px] h-0 w-0 border-y-[3px] border-r-[4px] border-y-transparent border-r-black" />
          </div>
          <div className="flex w-full flex-col border-r border-b border-[#d4d2cc] bg-[#f7f7f6] pb-1">
            <Grip across />
            {["line", "line2", "sCurve", "arcOff", "circleDot", "circle4", "plusOff"].map((n) => (
              <Tool key={n} name={n} wide />
            ))}
            <span className="ml-[5px] h-0 w-0 border-y-[3px] border-r-[4px] border-y-transparent border-r-black" />
          </div>
        </div>
        <Palette
          className="w-[34px] pt-[11px]"
          items={["save", "surf1", "surf2", "mesh", "tube", SEP, "hole", "boss", "pocket", "pad", "emboss", "slot", "groove", "dart", SEP, "goldCube", "lift", "offset", "sketch", "thicken"]}
        />
        <Palette
          className="w-[46px] pt-[142px]"
          items={["edgeBlend", "faceBlend", "softBlend", "chamfer", "shell", "thread", "sew", "patch", "unite", "subtract", "trimBody", "cylinders", "split", "slab"]}
        />
        <Palette
          className="w-[46px] pt-[130px]"
          items={["curve", "spline", "spline2", "rects", "text", "point", "points", "corner", "rect", "hex", SEP, "ellipse", "parabola", "hyper", "conic"]}
        />
        <Palette
          className="w-[35px] pt-[136px]"
          items={["surf1", "surf2", "mesh", "swept", "nsided", "trimSheet", "styled", SEP, "brick", "fold", "roll", "transform", "thicken", "chevrons", "planes"]}
        />
        <span className="w-px shrink-0" />
        <Viewport />
      </div>

      <footer className="flex h-[34px] shrink-0 items-center overflow-hidden border-t-2 border-white bg-linear-to-b from-[#f6f5f0] to-[#eae7d8] pl-[150px]">
        {["layers", "layers2"].map((n) => <Tool key={n} name={n} />)}
        <span className="mr-[3px] ml-px h-[26px] w-px shrink-0 bg-[#c8c5b4]" />
        <Tool name="csysLight" on />
        {["csysBox", "csys", "csysRot", "csysMove", "csysZero", "csysX", "csysY", "csysSave", "palette", "linkA", "linkB"].map((n) => (
          <Tool key={n} name={n} />
        ))}
        <span className="ml-[2px] flex pt-4"><Caret /></span>
        <span className="mr-[37px] ml-1 h-full w-[2px] shrink-0 bg-white" />
        <Grip />
        {["curveEdit", "paramEdit", "trim1", "trim2", "divide", "fillet", "stretch"].map((n) => <Tool key={n} name={n} />)}
      </footer>

      <TrimDialog />
      <MessageDialog />
      <InputMethodBar />
      <div className="pointer-events-none absolute bottom-[10px] left-2 flex flex-col font-bold text-[#5e98f0] opacity-85">
        <span className="text-[30px] leading-[28px]">三维网</span>
        <span className="text-[16px] leading-[14px]">3dPortal.cn</span>
      </div>
      <span className="absolute top-[62px] right-0 h-[455px] w-[2px] rounded-tl bg-[#2c78d8]" />
    </div>
  );
}
